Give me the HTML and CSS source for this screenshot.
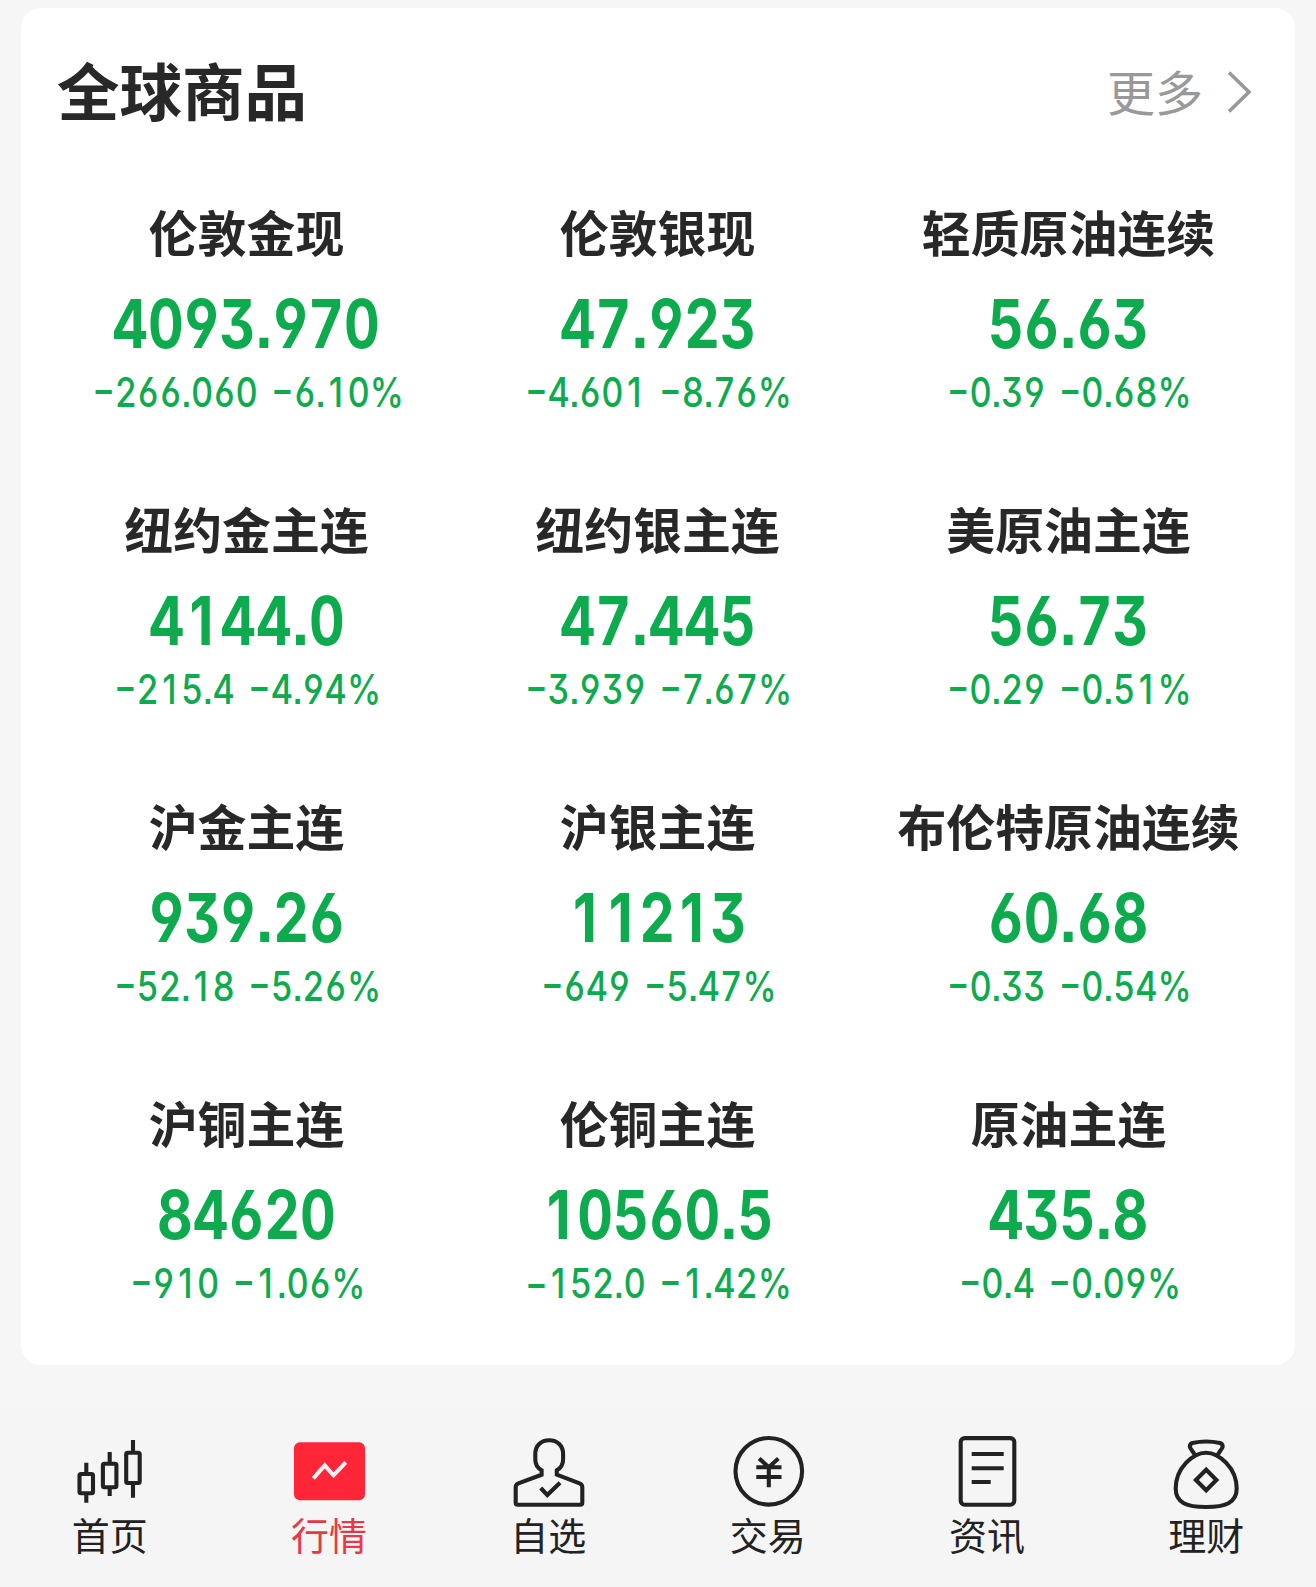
FILE: index.html
```html
<!DOCTYPE html>
<html lang="zh-CN">
<head>
<meta charset="utf-8">
<title>全球商品</title>
<link rel="stylesheet" href="styles.css">
</head>
<body>
<main class="card">
  <header class="card-head">
    <h1 class="card-title">全球商品</h1>
    <a class="more">更多<svg class="chevron" width="26" height="46" viewBox="0 0 26 46"><path d="M3 3.5 23 23 3 42.5"/></svg></a>
  </header>
  <section class="grid">
    <article class="quote"><h2 class="name">伦敦金现</h2><div class="price">4093<span class="dot">.</span>970</div><div class="change"><span>−266.060</span> <span>−6.<b class="one">1</b>0%</span></div></article>
    <article class="quote"><h2 class="name">伦敦银现</h2><div class="price">47<span class="dot">.</span>923</div><div class="change"><span>−4.60<b class="one">1</b></span> <span>−8.76%</span></div></article>
    <article class="quote"><h2 class="name">轻质原油连续</h2><div class="price">56<span class="dot">.</span>63</div><div class="change"><span>−0.39</span> <span>−0.68%</span></div></article>
    <article class="quote"><h2 class="name">纽约金主连</h2><div class="price">4<b class="one">1</b>44<span class="dot">.</span>0</div><div class="change"><span>−2<b class="one">1</b>5.4</span> <span>−4.94%</span></div></article>
    <article class="quote"><h2 class="name">纽约银主连</h2><div class="price">47<span class="dot">.</span>445</div><div class="change"><span>−3.939</span> <span>−7.67%</span></div></article>
    <article class="quote"><h2 class="name">美原油主连</h2><div class="price">56<span class="dot">.</span>73</div><div class="change"><span>−0.29</span> <span>−0.5<b class="one">1</b>%</span></div></article>
    <article class="quote"><h2 class="name">沪金主连</h2><div class="price">939<span class="dot">.</span>26</div><div class="change"><span>−52.<b class="one">1</b>8</span> <span>−5.26%</span></div></article>
    <article class="quote"><h2 class="name">沪银主连</h2><div class="price"><b class="one">1</b><b class="one">1</b>2<b class="one">1</b>3</div><div class="change"><span>−649</span> <span>−5.47%</span></div></article>
    <article class="quote"><h2 class="name">布伦特原油连续</h2><div class="price">60<span class="dot">.</span>68</div><div class="change"><span>−0.33</span> <span>−0.54%</span></div></article>
    <article class="quote"><h2 class="name">沪铜主连</h2><div class="price">84620</div><div class="change"><span>−9<b class="one">1</b>0</span> <span>−<b class="one">1</b>.06%</span></div></article>
    <article class="quote"><h2 class="name">伦铜主连</h2><div class="price"><b class="one">1</b>0560<span class="dot">.</span>5</div><div class="change"><span>−<b class="one">1</b>52.0</span> <span>−<b class="one">1</b>.42%</span></div></article>
    <article class="quote"><h2 class="name">原油主连</h2><div class="price">435<span class="dot">.</span>8</div><div class="change"><span>−0.4</span> <span>−0.09%</span></div></article>
  </section>
</main>
<nav class="tabbar">
  <a class="tab">
    <svg class="icon" viewBox="0 0 80 80"><rect x="9.5" y="42" width="13.5" height="19.3" rx="1.5"/><path d="M16.3 30.7V42M16.3 61.3v9.4"/><rect x="32.9" y="31.7" width="13.5" height="23.5" rx="1.5"/><path d="M39.7 20v11.7M39.7 55.2V64"/><rect x="56.2" y="20.7" width="13.5" height="30.3" rx="1.5"/><path d="M63 8v12.7M63 51v14.7"/></svg>
    <span>首页</span>
  </a>
  <a class="tab tab-active">
    <svg class="icon" viewBox="0 0 80 80"><rect class="plate" x="5" y="10.3" width="71" height="58" rx="6"/><path class="trend" d="M24.3 46.3 35.7 33.3 44.5 43.3 56.7 30.3"/></svg>
    <span>行情</span>
  </a>
  <a class="tab">
    <svg class="icon" viewBox="0 0 80 80"><path d="M33.6 38.3C29.5 36 27.3 32 27.3 27.5V22C27.3 13.5 33 8.2 41.2 8.2S55.1 13.5 55.1 22v5.5c0 4.5-2.2 8.5-6.3 10.8V42.7L71.6 51.3Q74.3 52.4 74.3 55V70.7Q74.3 72.7 72.3 72.7H9.7Q7.7 72.7 7.7 70.7V55Q7.7 52.4 10.4 51.3L33.6 42.7Z"/><path d="M32.7 56 39.3 63 52 50.7"/></svg>
    <span>自选</span>
  </a>
  <a class="tab">
    <svg class="icon" viewBox="0 0 80 80"><circle cx="40.8" cy="39.3" r="33.3"/><path d="M31.2 26.5 40.8 35.3 50.4 26.5M28.3 35.3H53.5M28.3 45H53.5M40.8 35.3V55.3"/></svg>
    <span>交易</span>
  </a>
  <a class="tab">
    <svg class="icon" viewBox="0 0 80 80"><rect x="13.7" y="6.1" width="53.6" height="66.6" rx="4"/><path d="M24.7 22h32M24.7 36.3h32M24.7 50h19"/></svg>
    <span>资讯</span>
  </a>
  <a class="tab">
    <svg class="icon" viewBox="0 0 80 80"><path d="M40 20.7C53 20.7 70.7 36 70.7 56.5C70.7 71 59 75 40 75S9.7 71 9.7 56.5C9.7 36 27 20.7 40 20.7Z"/><path d="M29 23 24.5 16.3Q22.5 12.5 26.5 11Q40 8 54 11Q58 12.5 56 16.3L51.5 23"/><path d="M40.2 37.7 50.4 48 40.2 58.3 29.9 48Z"/></svg>
    <span>理财</span>
  </a>
</nav>
</body>
</html>
```

FILE: styles.css
```css
* { box-sizing: border-box; }

body {
  margin: 0;
  height: 1587px;
  padding-top: 8px;
  display: flex;
  flex-direction: column;
  justify-content: space-between;
  background: #f6f6f6;
  color: #282828;
  font-family: "Noto Sans CJK SC", sans-serif;
}

.card {
  margin: 0 21px;
  height: 1357px;
  border-radius: 20px;
  background: #fff;
}

.card-head {
  height: 168px;
  padding: 0 43px 0 36px;
  display: flex;
  align-items: center;
  justify-content: space-between;
}

.card-title {
  margin: 0;
  padding-bottom: 6px;
  font-size: 62.5px;
  font-weight: 700;
  line-height: 90px;
}

.more {
  display: flex;
  align-items: center;
  padding-bottom: 4px;
  font-size: 48px;
  font-weight: 400;
  line-height: 70px;
  color: #999;
}

.chevron {
  margin: 4px 0 0 23px;
  fill: none;
  stroke: #999;
  stroke-width: 3.6;
}

.grid {
  padding: 0 21px 0 20px;
  display: grid;
  grid-template-columns: repeat(3, 1fr);
  grid-auto-rows: 297px;
}

.quote {
  display: flex;
  flex-direction: column;
  align-items: center;
  padding-top: 20px;
  white-space: nowrap;
}

.name {
  margin: 0;
  font-size: 48.9px;
  font-weight: 700;
  line-height: 70px;
}

.price,
.change {
  font-family: Inter, Roboto, sans-serif;
  font-feature-settings: "tnum", "cv03", "cv04", "cv09", "ss07";
  color: #0dab4e;
}

.price {
  margin-top: 18px;
  font-size: 67px;
  font-weight: 700;
  line-height: 80px;
  transform: scaleX(.825);
}

.dot { padding: 0 1.5px; }

/* Plain "1" without a foot, kept on the tabular digit width */
.one {
  display: inline-block;
  width: .645em;
  padding-right: .03em;
  font-weight: inherit;
  font-feature-settings: normal;
  text-align: center;
}

.change {
  padding-left: 3px;
  font-size: 41px;
  font-weight: 500;
  line-height: 56px;
  word-spacing: 5px;
  transform: scaleX(.84);
}

.tabbar {
  height: 180px;
  padding-top: 25px;
  display: grid;
  grid-template-columns: repeat(6, 1fr);
  background: #f5f5f5;
}

.tab {
  display: flex;
  flex-direction: column;
  align-items: center;
  font-size: 38px;
  line-height: 44px;
  color: #222;
}

.tab-active { color: #e63946; }

.icon {
  width: 80px;
  height: 80px;
  fill: none;
  stroke: #222;
  stroke-width: 4.1;
}

.icon .plate {
  fill: #ff2638;
  stroke: none;
}

.icon .trend { stroke: #fff0f2; }
```
